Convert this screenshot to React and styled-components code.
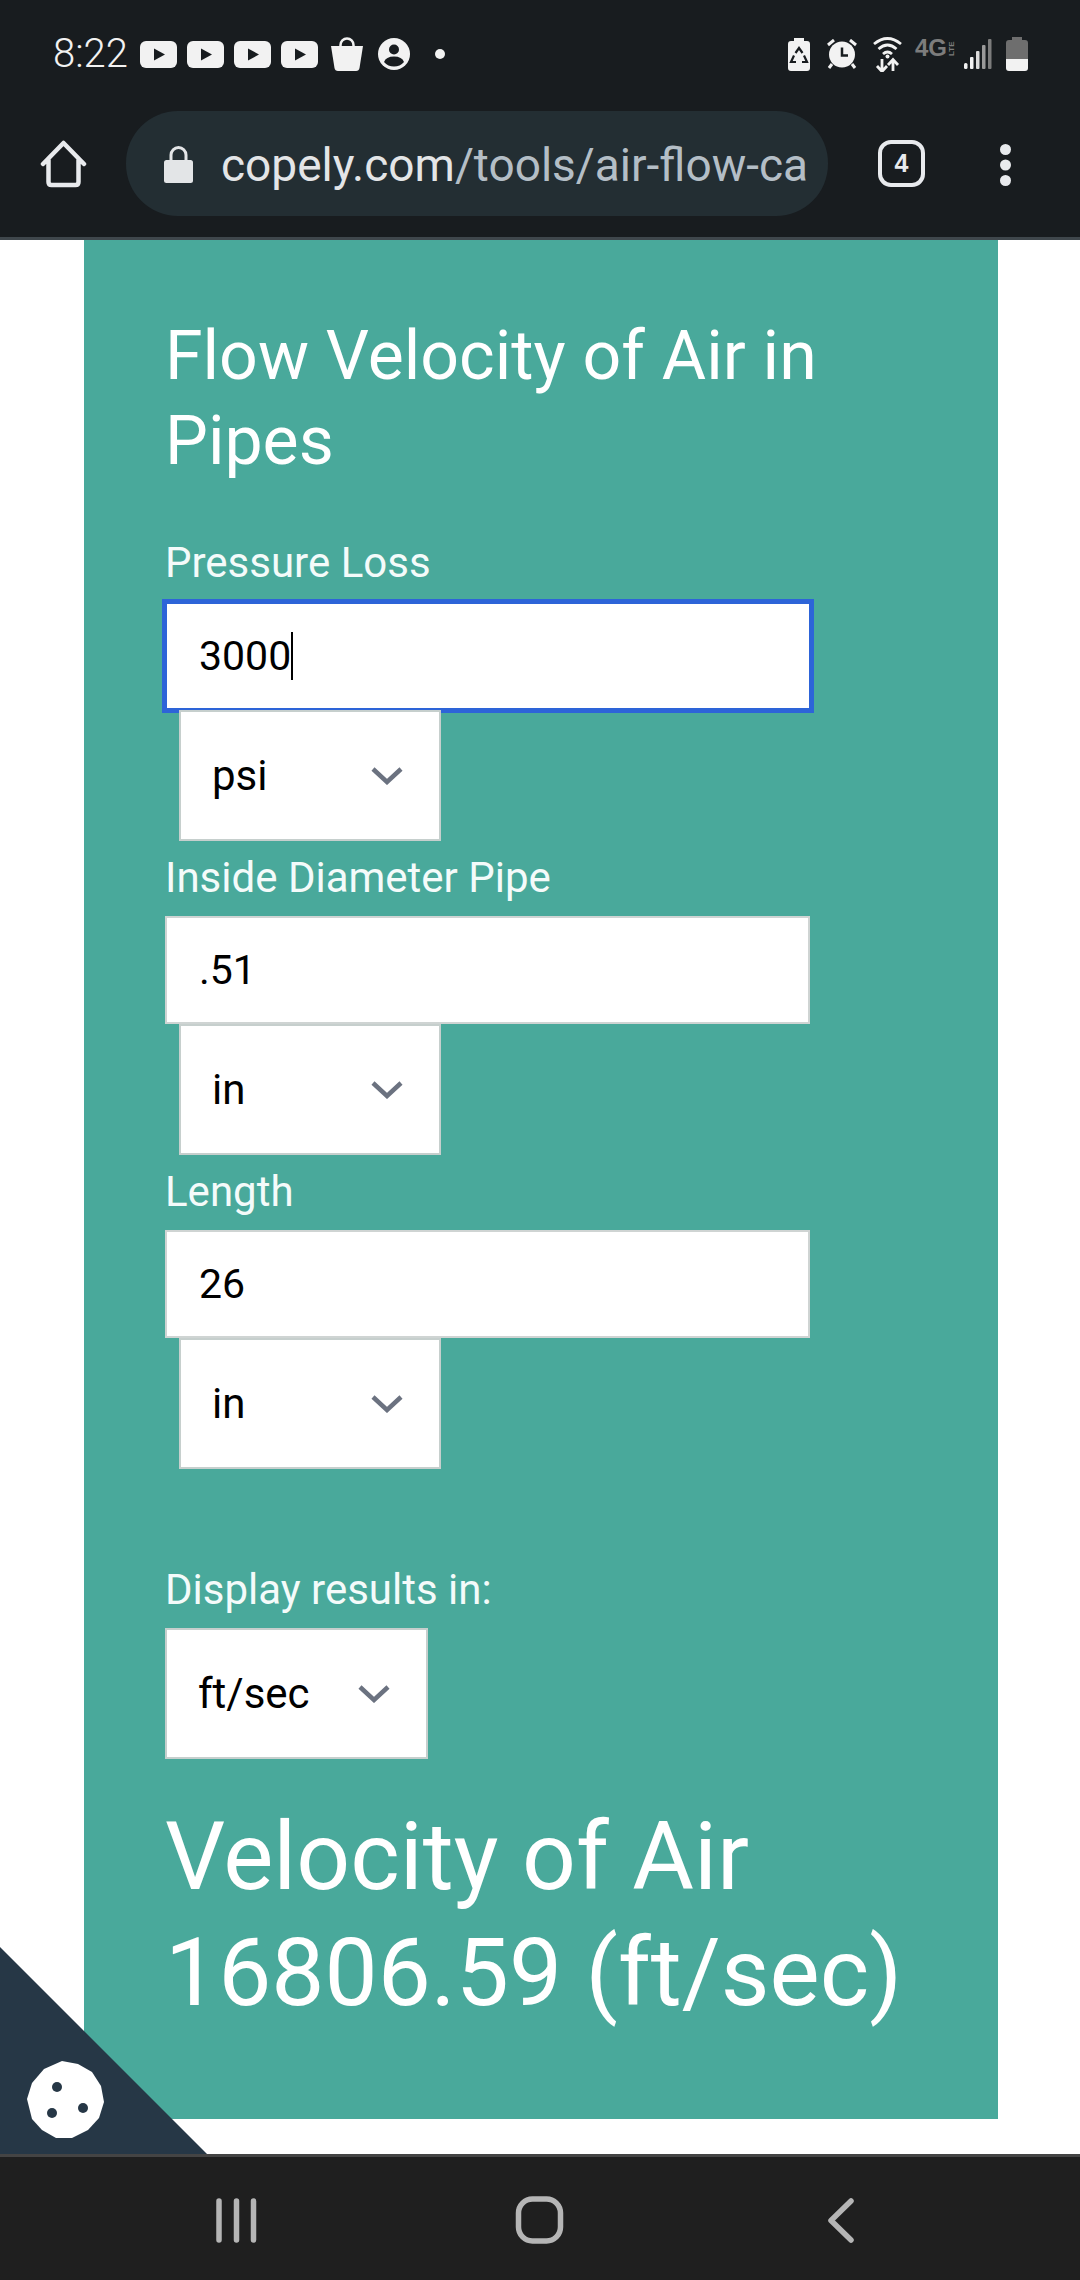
import React from 'react';
import styled, { createGlobalStyle } from 'styled-components';

const GlobalStyle = createGlobalStyle`
  html, body { margin: 0; padding: 0; background: #fff; }
  * { box-sizing: border-box; }
  body { font-family: Roboto, "Liberation Sans", sans-serif; }
`;

const Screen = styled.div`
  width: 1080px;
  height: 2280px;
  display: flex;
  flex-direction: column;
  overflow: hidden;
`;

const Header = styled.header`
  height: 240px;
  flex: none;
  background: #181c1f;
  border-bottom: 3px solid #3f474c;
`;

const StatusBar = styled.div`
  height: 108px;
  padding: 0 52px 0 53px;
  display: flex;
  align-items: center;
  justify-content: space-between;
`;

const StatusGroup = styled.div`
  display: flex;
  align-items: center;
`;

const Clock = styled.span`
  font-size: 40px;
  font-weight: 300;
  line-height: 40px;
  color: #f2f2f2;
  width: 87px;
`;

const Slot = styled.span`
  display: flex;
  margin-left: ${p => p.$ml || 0}px;
`;

const NetworkLabel = styled.span`
  display: flex;
  align-items: flex-start;
  width: 41px;
  height: 32px;
  margin-left: 13px;
  color: #7c7c7c;
  font-family: "Liberation Sans", sans-serif;
  font-size: 24px;
  font-weight: 700;
  line-height: 20px;
  small {
    font-size: 8px;
    line-height: 8px;
    writing-mode: vertical-rl;
    transform: rotate(180deg);
    margin: 2px 0 0 1px;
    height: 16px;
  }
`;

const Toolbar = styled.div`
  height: 129px;
  padding-top: 3px;
  display: flex;
  align-items: flex-start;
  position: relative;
`;

const HomeSlot = styled.span`
  display: flex;
  margin: 29px 0 0 40px;
`;

const UrlPill = styled.div`
  width: 702px;
  height: 105px;
  margin-left: 39px;
  padding-left: 38px;
  border-radius: 52px;
  background: #232e33;
  display: flex;
  align-items: center;
  white-space: nowrap;
  overflow: hidden;
`;

const UrlText = styled.span`
  margin-left: 28px;
  padding-top: 2px;
  font-size: 46px;
  color: #b4bec6;
  b {
    font-weight: 400;
    color: #e3e5e7;
  }
`;

const TabBadge = styled.div`
  width: 47px;
  height: 47px;
  margin: 29px 0 0 50px;
  border: 4px solid #e8eaed;
  border-radius: 13px;
  color: #e8eaed;
  display: flex;
  align-items: center;
  justify-content: center;
  font-size: 25px;
  font-weight: 700;
  font-family: "Liberation Sans", sans-serif;
`;

const MenuSlot = styled.span`
  display: flex;
  margin: 33px 0 0 75px;
`;

const Main = styled.main`
  flex: 1;
  position: relative;
  overflow: hidden;
  background: #fff;
`;

const Panel = styled.section`
  width: 914px;
  margin-left: 84px;
  padding: 74px 81px 88px;
  background: #49a99b;
  color: #fff;
`;

const Title = styled.h1`
  margin: 0 0 42px;
  font-size: 68px;
  line-height: 85px;
  font-weight: 400;
  width: 700px;
`;

const FieldLabel = styled.label`
  display: block;
  font-size: 42px;
  line-height: 74px;
  height: 75px;
  margin-top: ${p => p.$top || 0}px;
  color: #f4fbfa;
`;

const TextBox = styled.div`
  width: 645px;
  height: 108px;
  padding-left: 32px;
  display: flex;
  align-items: center;
  background: #fff;
  border: 2px solid #cfd4d3;
  color: #000;
  font-size: 41px;
  ${p => p.$focused && `
    width: 652px;
    height: 114px;
    margin: -2px -4px -3px -3px;
    padding-left: 32px;
    border: 5px solid #2d64d8;
  `}
`;

const Caret = styled.span`
  width: 2px;
  height: 48px;
  background: #000;
`;

const SelectBox = styled.div`
  width: ${p => p.$width}px;
  height: 131px;
  margin-left: ${p => p.$indent || 0}px;
  position: relative;
  z-index: 1;
  padding: 0 36px 0 31px;
  display: flex;
  align-items: center;
  justify-content: space-between;
  background: #fff;
  border: 2px solid #c6cfcd;
  color: #000;
  font-size: 42px;
`;

const Result = styled.div`
  margin-top: 40px;
  font-size: 94.6px;
  line-height: 116px;
  white-space: nowrap;
`;

const CookieCorner = styled.div`
  position: absolute;
  left: 0;
  bottom: 0;
  width: 207px;
  height: 207px;
  background: #263746;
  clip-path: polygon(0 0, 100% 100%, 0 100%);
`;

const CookieIcon = styled.svg`
  position: absolute;
  left: 26px;
  bottom: 15px;
`;

const BottomNav = styled.nav`
  height: 126px;
  flex: none;
  background: #1f1f1f;
  border-top: 3px solid #444;
`;

const NavIcons = styled.svg`
  display: block;
`;

const Chevron = () => (
  <svg width="32" height="18" viewBox="0 0 32 18">
    <path d="M2 2 L16 15 L30 2" fill="none" stroke="#6b7280" strokeWidth="4.5" />
  </svg>
);

const YoutubeIcon = ({ ml }) => (
  <Slot $ml={ml}>
    <svg width="37" height="27" viewBox="0 0 37 27">
      <rect width="37" height="27" rx="6" fill="#f2f2f2" />
      <path d="M14 7.5 L25 13.5 L14 19.5 Z" fill="#181c1f" />
    </svg>
  </Slot>
);

const BagIcon = () => (
  <Slot $ml={13}>
    <svg width="32" height="34" viewBox="0 0 32 34">
      <path d="M0 9 H32 L28.5 31 Q28 34 25 34 H7 Q4 34 3.500 31 Z" fill="#f2f2f2" />
      <path d="M9.500 11 V8 a6.500 6.500 0 0 1 13 0 V11" fill="none" stroke="#f2f2f2" strokeWidth="2.500" />
    </svg>
  </Slot>
);

const AvatarIcon = () => (
  <Slot $ml={15}>
    <svg width="32" height="32" viewBox="0 0 32 32">
      <circle cx="16" cy="16" r="16" fill="#f2f2f2" />
      <circle cx="16" cy="11.500" r="5" fill="#181c1f" />
      <path d="M6 24 Q8 18.500 16 18.500 Q24 18.500 26 24 Q22 28.500 16 28.500 Q10 28.500 6 24 Z" fill="#181c1f" />
    </svg>
  </Slot>
);

const DotIcon = () => (
  <Slot $ml={25}>
    <svg width="10" height="10" viewBox="0 0 10 10">
      <circle cx="5" cy="5" r="5" fill="#f2f2f2" />
    </svg>
  </Slot>
);

const RecycleBatteryIcon = () => (
  <svg width="22" height="33" viewBox="0 0 22 33">
    <path d="M6 0 H16 V3 H19 Q22 3 22 6 V30 Q22 33 19 33 H3 Q0 33 0 30 V6 Q0 3 3 3 H6 Z" fill="#f2f2f2" />
    <path d="M7.500 15 L11 10 L14.500 15 M16 17.500 L19 24 H14 M8 24 H3 L6 17.500" fill="none" stroke="#181c1f" strokeWidth="2.200" />
  </svg>
);

const AlarmIcon = () => (
  <Slot $ml={17}>
    <svg width="30" height="30" viewBox="0 0 30 30">
      <circle cx="15" cy="15.500" r="13" fill="#f2f2f2" />
      <path d="M15 8.500 V16.500 H21" fill="none" stroke="#181c1f" strokeWidth="2.500" />
      <path d="M1 6 L7 1 M29 6 L23 1 M5 25 L2 29 M25 25 L28 29" fill="none" stroke="#f2f2f2" strokeWidth="3" />
    </svg>
  </Slot>
);

const WifiIcon = () => (
  <Slot $ml={16}>
    <svg width="29" height="36" viewBox="0 0 29 36">
      <path d="M1 8 Q14.500 -3 28 8 M5.500 13 Q14.500 5 23.500 13 M10 18 Q14.500 14 19 18" fill="none" stroke="#f2f2f2" strokeWidth="2.800" />
      <circle cx="14.500" cy="20.500" r="2" fill="#f2f2f2" />
      <path d="M9 23 V35 M4 30 L9 35.500 L14 30 M20 35 V24 M15 29 L20 23.500 L25 29" fill="none" stroke="#f2f2f2" strokeWidth="2.800" />
    </svg>
  </Slot>
);

const SignalIcon = () => (
  <Slot $ml={8}>
    <svg width="28" height="30" viewBox="0 0 28 30">
      <rect x="0" y="24" width="3.500" height="6" rx="1.500" fill="#f2f2f2" />
      <rect x="6" y="18" width="3.500" height="12" rx="1" fill="#f2f2f2" />
      <rect x="12" y="12" width="3.500" height="18" rx="1" fill="#dcdcdc" />
      <rect x="18" y="6" width="3.500" height="24" rx="1" fill="#9a9a9a" />
      <rect x="24" y="0" width="3.500" height="30" rx="1" fill="#7c7c7c" />
    </svg>
  </Slot>
);

const BatteryIcon = () => (
  <Slot $ml={14}>
    <svg width="22" height="34" viewBox="0 0 22 34">
      <path d="M6 0 H16 V3 H19 Q22 3 22 6 V22 H0 V6 Q0 3 3 3 H6 Z" fill="#6e6e6e" />
      <path d="M0 22 H22 V31 Q22 34 19 34 H3 Q0 34 0 31 Z" fill="#f2f2f2" />
    </svg>
  </Slot>
);

const Field = ({ label, value, unit, focused }) => (
  <>
    <FieldLabel>{label}</FieldLabel>
    <TextBox $focused={focused}>
      {value}
      {focused && <Caret />}
    </TextBox>
    <SelectBox $width={262} $indent={14}>
      <span>{unit}</span>
      <Chevron />
    </SelectBox>
  </>
);

export default function App() {
  return (
    <Screen>
      <GlobalStyle />
      <Header>
        <StatusBar>
          <StatusGroup>
            <Clock>8:22</Clock>
            <YoutubeIcon />
            <YoutubeIcon ml={10} />
            <YoutubeIcon ml={10} />
            <YoutubeIcon ml={10} />
            <BagIcon />
            <AvatarIcon />
            <DotIcon />
          </StatusGroup>
          <StatusGroup>
            <RecycleBatteryIcon />
            <AlarmIcon />
            <WifiIcon />
            <NetworkLabel>4G<small>LTE</small></NetworkLabel>
            <SignalIcon />
            <BatteryIcon />
          </StatusGroup>
        </StatusBar>
        <Toolbar>
          <HomeSlot>
            <svg width="47" height="48" viewBox="0 0 47 48">
              <path d="M3 24 L23.500 3 L44 24 M8.500 20 V42 Q8.500 45 11.500 45 H35.500 Q38.500 45 38.500 42 V20" fill="none" stroke="#e8eaed" strokeWidth="4.500" strokeLinecap="round" strokeLinejoin="round" />
            </svg>
          </HomeSlot>
          <UrlPill>
            <svg width="29" height="38" viewBox="0 0 29 38">
              <path d="M7 17 V10 a7.500 7.500 0 0 1 15 0 V17" fill="none" stroke="#e3e5e7" strokeWidth="3" />
              <rect y="15" width="29" height="23" rx="2.500" fill="#e3e5e7" />
            </svg>
            <UrlText><b>copely.com</b>/tools/air-flow-ca</UrlText>
          </UrlPill>
          <TabBadge>4</TabBadge>
          <MenuSlot>
            <svg width="11" height="42" viewBox="0 0 11 42">
              <circle cx="5.500" cy="5.500" r="5.500" fill="#e8eaed" />
              <circle cx="5.500" cy="21" r="5.500" fill="#e8eaed" />
              <circle cx="5.500" cy="36.500" r="5.500" fill="#e8eaed" />
            </svg>
          </MenuSlot>
        </Toolbar>
      </Header>
      <Main>
        <Panel>
          <Title>Flow Velocity of Air in Pipes</Title>
          <Field label="Pressure Loss" value="3000" unit="psi" focused />
          <Field label="Inside Diameter Pipe" value=".51" unit="in" />
          <Field label="Length" value="26" unit="in" />
          <FieldLabel $top={84}>Display results in:</FieldLabel>
          <SelectBox $width={263}>
            <span>ft/sec</span>
            <Chevron />
          </SelectBox>
          <Result>Velocity of Air<br />16806.59 (ft/sec)</Result>
        </Panel>
        <CookieCorner />
        <CookieIcon width="78" height="78" viewBox="0 0 78 78">
          <path d="M36 0 L52 3 L66 11 L75 25 L78 41 L73 57 L62 69 L46 77 L30 77 L16 69 L6 58 L1 38 L6 22 L18 8 Z" fill="#fff" />
          <circle cx="31" cy="26" r="5" fill="#263746" />
          <circle cx="57" cy="47" r="5" fill="#263746" />
          <circle cx="26" cy="52" r="5" fill="#263746" />
        </CookieIcon>
      </Main>
      <BottomNav>
        <NavIcons width="1080" height="123" viewBox="0 2157 1080 123">
          <g fill="none" stroke="#b5b5b5" strokeWidth="5.500" strokeLinecap="round" strokeLinejoin="round">
            <path d="M219 2201 V2240 M236.500 2201 V2240 M253.500 2201 V2240" />
            <rect x="518.500" y="2199" width="42" height="42" rx="14" />
            <path d="M851 2201 L831 2220.500 L851 2240" />
          </g>
        </NavIcons>
      </BottomNav>
    </Screen>
  );
}
